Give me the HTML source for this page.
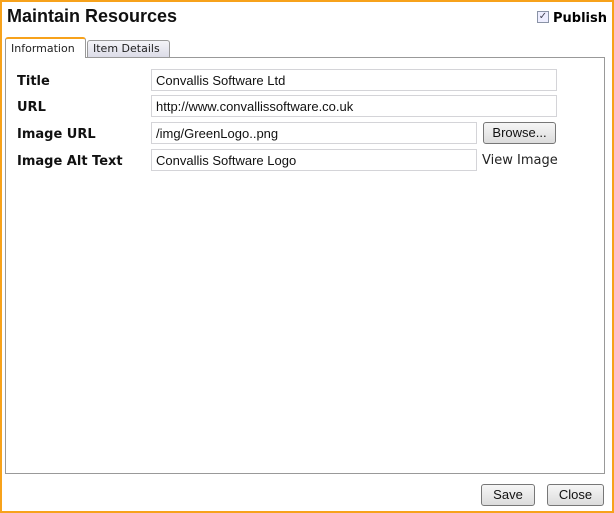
<!DOCTYPE html>
<html><head><style>
*{box-sizing:border-box;margin:0;padding:0}
body{width:614px;height:513px;background:#fff;font-family:"DejaVu Sans","Liberation Sans",sans-serif;position:relative;overflow:hidden}
.frame{position:absolute;left:0;top:0;width:614px;height:513px;border:2px solid #f7a21b}
.abs{position:absolute}
h1{position:absolute;left:7px;top:6px;font-family:"Liberation Sans",sans-serif;font-size:18px;font-weight:bold;color:#111}
.pub{left:537px;top:11px;font-size:13px;font-weight:bold}
.cb{left:537px;top:11px;width:12px;height:12px;border:1px solid #8a93a6;background:#eef;font-size:10px;line-height:10px;text-align:center;color:#445}
.panel{left:5px;top:57px;width:600px;height:417px;border:1px solid #999}
.tab{font-size:11px;color:#222;border:1px solid #999;border-bottom:none;padding:3px 5px 0}
.t1{left:5px;top:37px;width:81px;height:21px;background:#fff;border-top:2px solid #f7a21b;border-radius:3px 3px 0 0}
.t2{left:87px;top:40px;width:83px;height:17px;background:linear-gradient(#f4f4f8,#dcdce8);border-radius:3px 3px 0 0;padding-top:1px}
.lbl{left:17px;font-size:13px;font-weight:bold;color:#111}
.in{left:151px;height:22px;border:1px solid #d4d4d8;font-family:"Liberation Sans",sans-serif;font-size:13px;padding:3px 4px;color:#111}
.btn{border:1px solid #777;border-radius:3px;background:linear-gradient(#f6f6f6,#dcdcdc);font-family:"Liberation Sans",sans-serif;font-size:13px;text-align:center;line-height:20px;color:#111}
</style></head><body>
<div class="frame"></div>
<h1>Maintain Resources</h1>
<div class="abs cb">✓</div>
<div class="abs pub" style="left:553px">Publish</div>
<div class="abs panel"></div>
<div class="abs tab t1">Information</div>
<div class="abs tab t2">Item Details</div>
<div class="abs lbl" style="top:74px">Title</div>
<div class="abs lbl" style="top:100px">URL</div>
<div class="abs lbl" style="top:127px">Image URL</div>
<div class="abs lbl" style="top:154px">Image Alt Text</div>
<div class="abs in" style="top:69px;width:406px">Convallis Software Ltd</div>
<div class="abs in" style="top:95px;width:406px">http://www.convallissoftware.co.uk</div>
<div class="abs in" style="top:122px;width:326px">/img/GreenLogo..png</div>
<div class="abs in" style="top:149px;width:326px">Convallis Software Logo</div>
<div class="abs btn" style="left:483px;top:122px;width:73px;height:22px">Browse...</div>
<div class="abs" style="left:482px;top:153px;font-size:13px;color:#222">View Image</div>
<div class="abs btn" style="left:481px;top:484px;width:54px;height:22px">Save</div>
<div class="abs btn" style="left:547px;top:484px;width:57px;height:22px">Close</div>
</body></html>
